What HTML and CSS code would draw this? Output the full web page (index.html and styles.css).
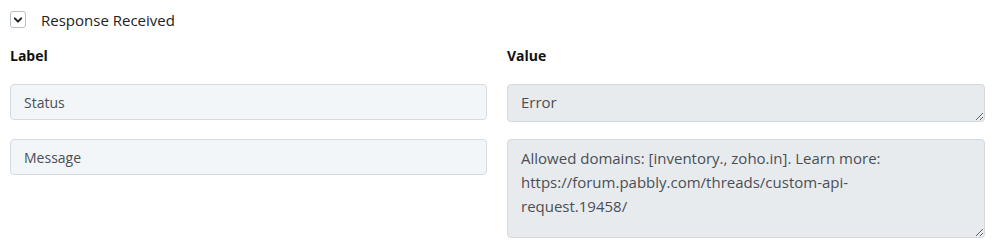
FILE: index.html
```html
<!DOCTYPE html>
<html lang="en">
<head>
    <meta charset="UTF-8">
    <title>Response Received</title>
    <link rel="stylesheet" href="styles.css">
</head>
<body>
    <div class="panel">
        <div class="toggle">
            <span class="toggle-box">
                <svg width="10" height="10" viewBox="0 0 10 10"><path d="M1.8 3.4 L5 6.6 L8.2 3.4" fill="none" stroke="#1f2329" stroke-width="2" stroke-linecap="round" stroke-linejoin="round"/></svg>
            </span>
            <span class="toggle-label">Response Received</span>
        </div>

        <div class="grid">
            <div class="head">Label</div>
            <div class="head">Value</div>

            <input class="field" type="text" value="Status" readonly>
            <textarea class="value" rows="1" readonly>Error</textarea>

            <input class="field" type="text" value="Message" readonly>
            <textarea class="value tall" readonly>Allowed domains: [inventory., zoho.in]. Learn more: https://forum.pabbly.com/threads/custom-api-request.19458/</textarea>
        </div>
    </div>
</body>
</html>
```

FILE: styles.css
```css
body {
    margin: 0;
    font-family: 'Open Sans', sans-serif;
    background: #fff;
    color: #222;
}
.panel {
    padding: 11px 21px 0 10px;
}
.toggle {
    display: flex;
    align-items: center;
    height: 17px;
}
.toggle-box {
    box-sizing: border-box;
    width: 16px;
    height: 17px;
    border: 1px solid #b9bfc7;
    border-radius: 3px;
    display: flex;
    align-items: center;
    justify-content: center;
}
.toggle-label {
    margin-left: 15px;
    font-size: 15px;
    color: #222;
}
.grid {
    display: grid;
    grid-template-columns: 477px 478px;
    column-gap: 20px;
    row-gap: 17px;
    margin-top: 19px;
}
.head {
    font-size: 14px;
    font-weight: 700;
    color: #111;
    line-height: 18px;
    margin-bottom: 2px;
}
.field {
    box-sizing: border-box;
    height: 36px;
    margin: 0;
    padding: 0 13px;
    font-family: 'Open Sans', sans-serif;
    font-size: 14px;
    color: #4a4f55;
    background: #f3f6f9;
    border: 1px solid #d6dbe1;
    border-radius: 4px;
    outline: none;
}
.value {
    box-sizing: border-box;
    height: 38px;
    margin: 0;
    padding: 5px 40px 5px 13px;
    font-family: 'Open Sans', sans-serif;
    font-size: 15px;
    line-height: 24px;
    color: #4a4f55;
    background: #e8ebee;
    border: 1px solid #d3d8de;
    border-radius: 4px;
    outline: none;
    resize: vertical;
    overflow: hidden;
}
.value.tall {
    height: 99px;
    padding-top: 6px;
}
```
